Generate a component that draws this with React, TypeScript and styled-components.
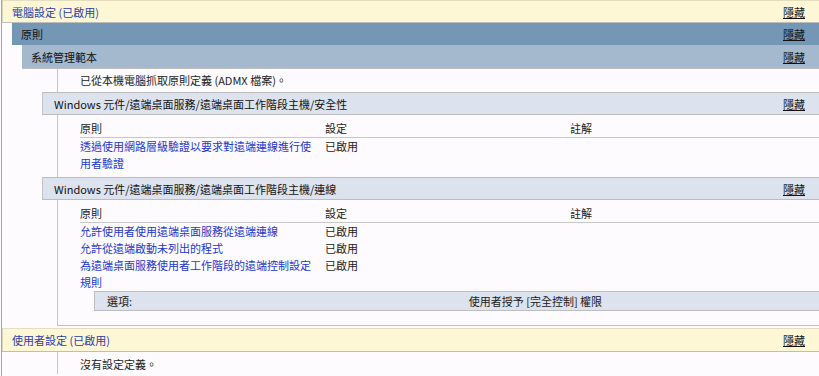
import React from "react";
import styled, { createGlobalStyle } from "styled-components";

const Global = createGlobalStyle`
  html, body { margin: 0; padding: 0; background: #fefbff; }
  body {
    font-family: "Noto Sans CJK TC", "Noto Sans", sans-serif;
    font-size: 11px;
    color: #1a1a1a;
  }
`;

const Page = styled.div`
  margin-left: 1px;
  border-left: 1px solid #a4a4a4;
  min-height: 376px;
  overflow: hidden;
`;

type Tone = "root" | "policy" | "admin";

const toneBg: Record<Tone, string> = {
  root: "#fef7d5",
  policy: "#7397b4",
  admin: "#a5b9ce",
};

const SectionBar = styled.div<{ $tone: Tone; $indent: number; $h: number }>`
  display: flex;
  align-items: center;
  justify-content: space-between;
  box-sizing: border-box;
  height: ${(p) => p.$h}px;
  margin-left: ${(p) => p.$indent}px;
  padding: 0 14px 0 9px;
  background: ${(p) => toneBg[p.$tone]};
  border-left: ${(p) => (p.$tone === "root" ? "1px solid #ddd6b8" : "none")};
  border-top: ${(p) => (p.$tone === "root" ? "1px solid #e4ddc0" : "none")};
  border-bottom: ${(p) => (p.$tone === "policy" ? "none" : "1px solid #bdbdbd")};
`;

const RootTitle = styled.span`
  color: #2b3da8;
`;

const BarTitle = styled.span`
  color: #111;
`;

const HideLink = styled.a`
  color: #111;
  text-decoration: underline;
  cursor: pointer;
`;

const PathBar = styled.div`
  display: flex;
  align-items: center;
  justify-content: space-between;
  box-sizing: border-box;
  height: 23px;
  margin-left: 20px;
  padding: 0 14px 0 11px;
  background: #dde3ee;
  border-top: 1px solid #bcbcbc;
  border-bottom: 1px solid #bcbcbc;
  border-left: 1px solid #c4c4c4;
`;

const ContentBox = styled.div<{ $indent: number; $closed?: boolean; $pad?: string }>`
  margin-left: ${(p) => p.$indent}px;
  border-left: 1px solid #c6c6c6;
  border-bottom: ${(p) => (p.$closed ? "1px solid #c0c0c0" : "none")};
  padding: ${(p) => p.$pad ?? "0"};
  padding-left: 22px;
`;

const Note = styled.div<{ $h: number }>`
  height: ${(p) => p.$h}px;
  line-height: ${(p) => p.$h}px;
`;

const PolicyTable = styled.table`
  width: 100%;
  table-layout: fixed;
  border-collapse: collapse;
`;

const Col = styled.col<{ $w?: number }>`
  width: ${(p) => (p.$w ? `${p.$w}px` : "auto")};
`;

const HeadCell = styled.th`
  text-align: left;
  font-weight: normal;
  height: 18px;
  padding: 0 10px 0 0;
  line-height: 17px;
  border-bottom: 1px solid #c8c8c8;
  vertical-align: middle;
`;

const Cell = styled.td`
  padding: 0 10px 0 0;
  line-height: 17px;
  vertical-align: top;
`;

const PolicyLink = styled.a`
  color: #2237c9;
  text-decoration: none;
`;

const OptionsCell = styled.td`
  padding: 0 0 0 14px;
`;

const OptionsTable = styled.table`
  width: 100%;
  table-layout: fixed;
  border-collapse: collapse;
  background: #dde3ee;
  border: 1px solid #bdbdbd;
  border-right: none;
`;

const OptionCell = styled.td`
  height: 18px;
  padding: 0 0 0 12px;
  line-height: 17px;
`;

type Row = { name: string; setting: string };

const PolicyBlock: React.FC<{ rows: Row[]; option?: [string, string]; closed?: boolean }> = ({
  rows,
  option,
  closed,
}) => (
  <ContentBox $indent={35} $closed={closed} $pad={option ? "4px 0 14px" : "4px 0 5px"}>
    <PolicyTable>
      <colgroup>
        <Col $w={245} />
        <Col $w={245} />
        <Col />
      </colgroup>
      <thead>
        <tr>
          <HeadCell>原則</HeadCell>
          <HeadCell>設定</HeadCell>
          <HeadCell>註解</HeadCell>
        </tr>
      </thead>
      <tbody>
        {rows.map((r) => (
          <tr key={r.name}>
            <Cell>
              <PolicyLink>{r.name}</PolicyLink>
            </Cell>
            <Cell>{r.setting}</Cell>
            <Cell />
          </tr>
        ))}
        {option && (
          <tr>
            <OptionsCell colSpan={3}>
              <OptionsTable>
                <tbody>
                  <tr>
                    <OptionCell>{option[0]}</OptionCell>
                    <OptionCell>{option[1]}</OptionCell>
                  </tr>
                </tbody>
              </OptionsTable>
            </OptionsCell>
          </tr>
        )}
      </tbody>
    </PolicyTable>
  </ContentBox>
);

const Indent = styled.div<{ $by: number }>`
  margin-left: ${(p) => p.$by}px;
`;

const Spacer = styled.div`
  height: 2px;
`;

export default function App() {
  return (
    <>
      <Global />
      <Page>
        <SectionBar $tone="root" $indent={0} $h={23}>
          <RootTitle>電腦設定 (已啟用)</RootTitle>
          <HideLink>隱藏</HideLink>
        </SectionBar>
        <Indent $by={10}>
          <SectionBar $tone="policy" $indent={0} $h={22}>
            <BarTitle>原則</BarTitle>
            <HideLink>隱藏</HideLink>
          </SectionBar>
          <Indent $by={10}>
            <SectionBar $tone="admin" $indent={0} $h={24}>
              <BarTitle>系統管理範本</BarTitle>
              <HideLink>隱藏</HideLink>
            </SectionBar>
            <ContentBox $indent={35}>
              <Note $h={23}>已從本機電腦抓取原則定義 (ADMX 檔案)。</Note>
            </ContentBox>
            <PathBar>
              <BarTitle>Windows 元件/遠端桌面服務/遠端桌面工作階段主機/安全性</BarTitle>
              <HideLink>隱藏</HideLink>
            </PathBar>
            <PolicyBlock
              rows={[{ name: "透過使用網路層級驗證以要求對遠端連線進行使用者驗證", setting: "已啟用" }]}
            />
            <PathBar>
              <BarTitle>Windows 元件/遠端桌面服務/遠端桌面工作階段主機/連線</BarTitle>
              <HideLink>隱藏</HideLink>
            </PathBar>
            <PolicyBlock
              closed
              rows={[
                { name: "允許使用者使用遠端桌面服務從遠端連線", setting: "已啟用" },
                { name: "允許從遠端啟動未列出的程式", setting: "已啟用" },
                { name: "為遠端桌面服務使用者工作階段的遠端控制設定規則", setting: "已啟用" },
              ]}
              option={["選項:", "使用者授予 [完全控制] 權限"]}
            />
          </Indent>
        </Indent>
        <Spacer />
        <SectionBar $tone="root" $indent={0} $h={24}>
          <RootTitle>使用者設定 (已啟用)</RootTitle>
          <HideLink>隱藏</HideLink>
        </SectionBar>
        <Indent $by={20}>
          <ContentBox $indent={35} $pad="2px 0 0">
            <Note $h={20}>沒有設定定義。</Note>
          </ContentBox>
        </Indent>
      </Page>
    </>
  );
}
